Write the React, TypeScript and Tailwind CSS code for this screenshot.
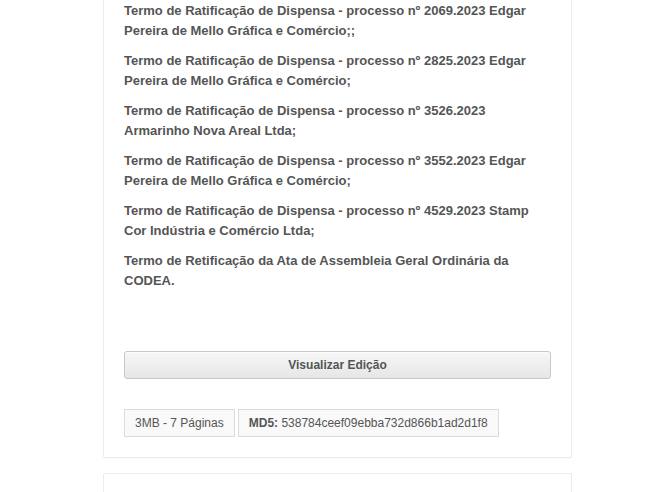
import React from 'react';

const items = [
  'Termo de Ratificação de Dispensa - processo nº 2069.2023 Edgar Pereira de Mello Gráfica e Comércio;;',
  'Termo de Ratificação de Dispensa - processo nº 2825.2023 Edgar Pereira de Mello Gráfica e Comércio;',
  'Termo de Ratificação de Dispensa - processo nº 3526.2023 Armarinho Nova Areal Ltda;',
  'Termo de Ratificação de Dispensa - processo nº 3552.2023 Edgar Pereira de Mello Gráfica e Comércio;',
  'Termo de Ratificação de Dispensa - processo nº 4529.2023 Stamp Cor Indústria e Comércio Ltda;',
  'Termo de Retificação da Ata de Assembleia Geral Ordinária da CODEA.',
];

export default function App() {
  return (
    <div
      className="h-[492px] w-[661px] overflow-hidden bg-white pl-[103px]"
      style={{fontFamily: '"Liberation Sans", Arial, sans-serif'}}
    >
      <div className="-mt-[21px] w-[469px] rounded-[2px] border border-[#ececec] bg-white px-[20px] pt-[21px] pb-[20px] shadow-[0_1px_2px_rgba(0,0,0,0.03)]">
        <div className="text-[13px] font-bold leading-[20px] text-[#555]">
          {items.map((t, i) => (
            <p key={i} className="mb-[10px] w-[427px]">
              {t}
            </p>
          ))}
        </div>
        <button className="mt-[60px] flex h-[28px] w-[427px] items-center justify-center rounded-[3px] border border-[#c8c8c8] bg-gradient-to-b from-[#f7f7f7] to-[#e6e6e6] text-[12px] font-bold text-[#555] shadow-[inset_0_1px_0_rgba(255,255,255,0.8)]">
          Visualizar Edição
        </button>
        <div className="mt-[30px] flex gap-[3px] text-[12px] text-[#555]">
          <span className="flex h-[28px] items-center border border-[#dcdcdc] bg-[#f9f9f9] px-[10px]">
            3MB - 7 Páginas
          </span>
          <span className="flex h-[28px] items-center border border-[#dcdcdc] bg-[#f9f9f9] px-[10px]">
            <b>MD5:</b>&nbsp;538784ceef09ebba732d866b1ad2d1f8
          </span>
        </div>
      </div>
      <div className="mt-[15px] h-[60px] w-[469px] rounded-[2px] border border-[#ececec] bg-white" />
    </div>
  );
}
